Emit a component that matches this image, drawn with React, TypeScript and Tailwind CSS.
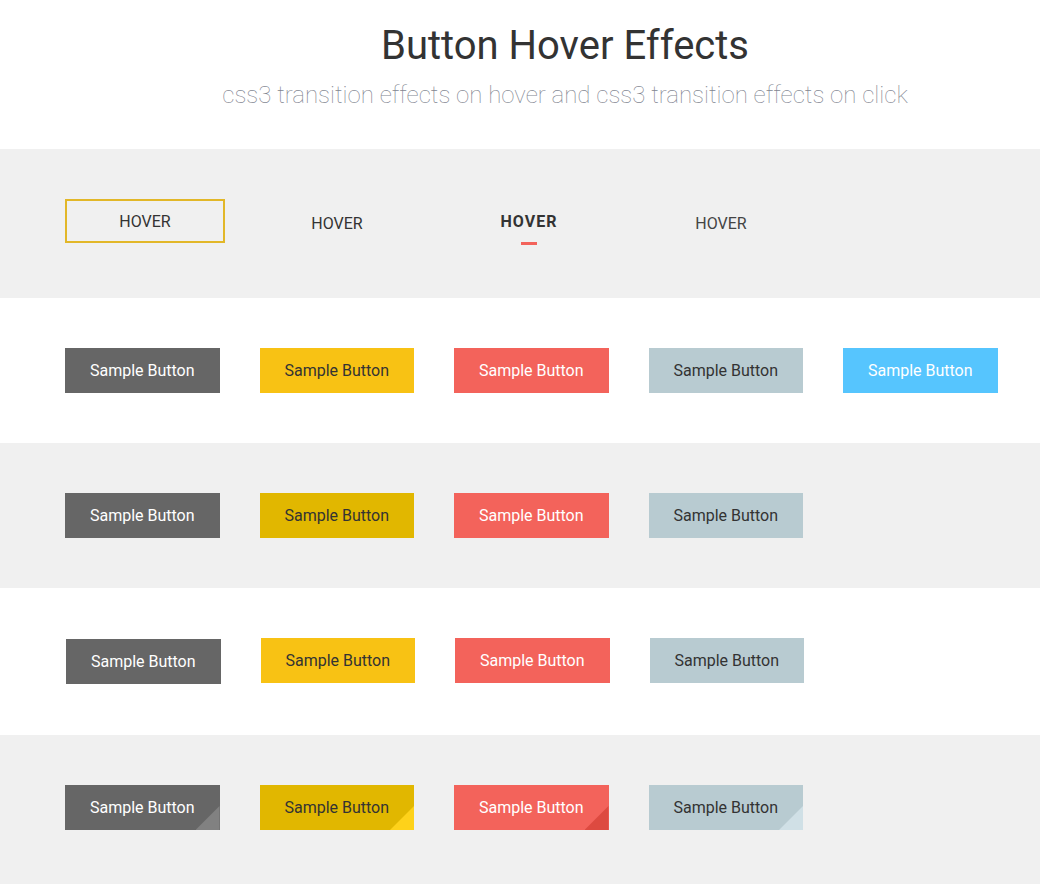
import React from "react";

type Btn = { bg: string; text: string; tri?: string };

const font = { fontFamily: "Roboto, 'Liberation Sans', sans-serif" };

function SampleButton({ bg, text, tri, extra = "" }: Btn & { extra?: string }) {
  return (
    <div
      className={`relative flex h-[45px] w-[154.5px] shrink-0 items-center justify-center overflow-hidden text-[16px] ${bg} ${text} ${extra}`}
    >
      <span className="relative z-10">Sample Button</span>
      {tri && (
        <div
          className={`absolute bottom-0 right-0 h-[24px] w-[24px] ${tri} [clip-path:polygon(100%_0,100%_100%,0_100%)]`}
        />
      )}
    </div>
  );
}

export default function App() {
  const row2: Btn[] = [
    { bg: "bg-[#666666]", text: "text-white" },
    { bg: "bg-[#f8c214]", text: "text-[#333333]" },
    { bg: "bg-[#f3635b]", text: "text-white" },
    { bg: "bg-[#b8cbd1]", text: "text-[#333333]" },
    { bg: "bg-[#56c5fe]", text: "text-white" },
  ];
  const row3: Btn[] = [
    { bg: "bg-[#666666]", text: "text-white" },
    { bg: "bg-[#e1b700]", text: "text-[#333333]" },
    { bg: "bg-[#f3635b]", text: "text-white" },
    { bg: "bg-[#b8cbd1]", text: "text-[#333333]" },
  ];
  const row4: Btn[] = [
    { bg: "bg-[#666666]", text: "text-white" },
    { bg: "bg-[#f8c214]", text: "text-[#333333]" },
    { bg: "bg-[#f3635b]", text: "text-white" },
    { bg: "bg-[#b8cbd1]", text: "text-[#333333]" },
  ];
  const row5: Btn[] = [
    { bg: "bg-[#666666]", text: "text-white", tri: "bg-[#818181]" },
    { bg: "bg-[#e1b700]", text: "text-[#333333]", tri: "bg-[#fed21a]" },
    { bg: "bg-[#f3635b]", text: "text-white", tri: "bg-[#dd4a40]" },
    { bg: "bg-[#b8cbd1]", text: "text-[#333333]", tri: "bg-[#d0e0e6]" },
  ];

  return (
    <div className="min-h-[884px] w-[1040px] bg-[#f0f0f0]" style={font}>
      {/* Header */}
      <header className="flex h-[149px] flex-col items-center bg-white pl-[90px] pt-[21px]">
        <h1 className="text-[40px] leading-[50px] font-normal text-[#333333]">
          Button Hover Effects
        </h1>
        <p className="mt-[9px] text-[24px] leading-[30px] font-thin text-[#7f8590]">
          css3 transition effects on hover and css3 transition effects on click
        </p>
      </header>

      {/* Row 1 */}
      <section className="flex h-[149px] gap-[32px] bg-[#f0f0f0] pl-[65px] pt-[50px]">
        <div className="flex h-[44px] w-[160px] items-center justify-center border-2 border-[#e2b728] pt-[2px] text-[16px] text-[#333333]">
          HOVER
        </div>
        <div className="flex h-[44px] w-[160px] items-center justify-center pt-[6px] text-[16px] text-[#333333]">
          HOVER
        </div>
        <div className="relative flex h-[44px] w-[160px] items-center justify-center pt-[2px] text-[16px] font-bold tracking-[1px] text-[#333333]">
          HOVER
          <span className="absolute bottom-[-2px] left-[72px] h-[3px] w-[16px] bg-[#f3635b]" />
        </div>
        <div className="flex h-[44px] w-[160px] items-center justify-center pt-[6px] text-[16px] text-[#444444]">
          HOVER
        </div>
      </section>

      {/* Row 2 */}
      <section className="flex h-[145px] items-center gap-[40px] bg-white pl-[65px]">
        {row2.map((b, i) => (
          <SampleButton key={i} {...b} />
        ))}
      </section>

      {/* Row 3 */}
      <section className="flex h-[145px] items-center gap-[40px] bg-[#f0f0f0] pl-[65px]">
        {row3.map((b, i) => (
          <SampleButton key={i} {...b} />
        ))}
      </section>

      {/* Row 4 */}
      <section className="flex h-[147px] items-start gap-[40px] bg-white pl-[66px] pt-[50px]">
        {row4.map((b, i) => (
          <SampleButton key={i} {...b} extra={i === 0 ? "mt-px" : ""} />
        ))}
      </section>

      {/* Row 5 */}
      <section className="flex h-[149px] items-start gap-[40px] bg-[#f0f0f0] pl-[65px] pt-[50px]">
        {row5.map((b, i) => (
          <SampleButton key={i} {...b} />
        ))}
      </section>
    </div>
  );
}
